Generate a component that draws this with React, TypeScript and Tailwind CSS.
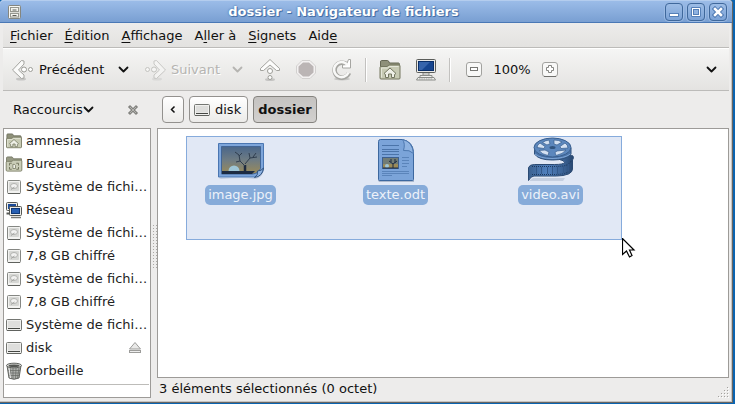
import type { ReactNode } from "react";

/* ---------- small glyphs ---------- */

function Chevron({ color = "#111" }: { color?: string }) {
  return (
    <svg width="11" height="7" viewBox="0 0 11 7" aria-hidden="true" className="shrink-0">
      <path d="M1.500 1.500L5.500 5.500L9.500 1.500" fill="none" stroke={color} strokeWidth="1.800" strokeLinecap="round" strokeLinejoin="round" />
    </svg>
  );
}

function BackIcon() {
  return (
    <svg width="24" height="24" viewBox="0 0 24 24" aria-hidden="true">
      <ellipse cx="10" cy="21" rx="5" ry="1.500" fill="#000" opacity=".15" />
      <path d="M10.500 2.500L1.500 12L10.500 20.500L13 20V17L7.500 12L13 6V3Z" fill="#fbfbfa" stroke="#a3a39f" strokeLinejoin="round" />
      <circle cx="13" cy="11.500" r="2.500" fill="#fff" stroke="#9c9c97" />
      <circle cx="19.500" cy="11.500" r="2" fill="#fff" stroke="#9c9c97" />
    </svg>
  );
}

function ForwardIcon() {
  return (
    <svg width="24" height="24" viewBox="0 0 24 24" aria-hidden="true" opacity=".5">
      <ellipse cx="14" cy="21" rx="5" ry="1.500" fill="#000" opacity=".12" />
      <path d="M13.500 2.500L22.500 12L13.500 20.500L11 20V17L16.500 12L11 6V3Z" fill="#fbfbfa" stroke="#a3a39f" strokeLinejoin="round" />
      <circle cx="4.500" cy="11.500" r="2" fill="#fff" stroke="#9c9c97" />
      <circle cx="11" cy="11.500" r="2.500" fill="#fff" stroke="#9c9c97" />
    </svg>
  );
}

function UpIcon() {
  return (
    <svg width="24" height="24" viewBox="0 0 24 24" aria-hidden="true">
      <ellipse cx="12" cy="21.500" rx="5" ry="1.500" fill="#000" opacity=".15" />
      <path d="M12 1.500L2.500 10.500V12.500H5.500L12 7L18.500 12.500H21.500V10.500Z" fill="#fdfdfc" stroke="#a3a39f" strokeLinejoin="round" />
      <circle cx="12" cy="13" r="2.500" fill="#fff" stroke="#9c9c97" />
      <circle cx="12" cy="19.500" r="2" fill="#fff" stroke="#9c9c97" />
    </svg>
  );
}

function StopIcon() {
  return (
    <svg width="24" height="24" viewBox="0 0 24 24" aria-hidden="true">
      <path d="M8 2.500h8l5.500 5.500v7L16 20.500H8L2.500 15V8Z" fill="#f3f1f1" stroke="#d2d0cf" />
      <path d="M9 4.500h6l4.500 4v6l-4.500 4H9l-4.500-4v-6Z" fill="#bbb5b5" />
    </svg>
  );
}

function ReloadIcon() {
  return (
    <svg width="24" height="24" viewBox="0 0 24 24" aria-hidden="true">
      <ellipse cx="12" cy="21" rx="8" ry="1.500" fill="#000" opacity=".15" />
      <path d="M17 6.500A7.500 7.500 0 1 0 19 15" fill="none" stroke="#a6a6a2" strokeWidth="4.500" />
      <path d="M20.500 1.500v8.500h-8v-3l4-.5l2-5Z" fill="#fff" stroke="#a6a6a2" strokeLinejoin="round" />
      <path d="M17.500 7A7.500 7.500 0 1 0 18.500 14.500" fill="none" stroke="#f8f8f7" strokeWidth="2.500" />
    </svg>
  );
}

function HomeFolderIcon({ size }: { size: number }) {
  return (
    <svg width={size} height={size} viewBox="0 0 24 24" aria-hidden="true" className="shrink-0">
      <path d="M2.500 20V4Q2.500 2.500 3.500 2.500H9.500Q10.500 2.500 11 4L11.500 5H20.500Q21.500 5 21.500 6.500V20Z" fill="#8e9079" stroke="#666855" />
      <path d="M2 20V9.500Q2 8.500 3 8.500H9L11 7H21Q22 7 22 8V20Q22 21 21 21H3Q2 21 2 20Z" fill="#c7cab3" stroke="#74775f" />
      <path d="M3.500 19.500V10H9.500L11.500 8.500H20.500" fill="none" stroke="#e5e7d9" />
      <path d="M6 15.500L12 10L18 15.500L16.500 16.500V19.500H13.500V16H10.500V19.500H7.500V16.500Z" fill="#eff0e7" stroke="#737660" />
    </svg>
  );
}

function DesktopFolderIcon() {
  return (
    <svg width="18" height="18" viewBox="0 0 24 24" aria-hidden="true" className="shrink-0">
      <path d="M2 20V4Q2 2.500 3.500 2.500H9.500L11.500 5H22V20Z" fill="#979a84" stroke="#696c58" />
      <path d="M1.500 20V9.500Q1.500 8.500 3 8.500H9L11 7H21Q22.500 7 22.500 8V20Q22.500 21.500 21 21.500H3Q1.500 21.500 1.500 20Z" fill="#c9ccb7" stroke="#74775f" />
      <path d="M6 14v-3h3M15 11h3v3M18 16v3h-3M9 19H6v-3" fill="none" stroke="#73765f" strokeWidth="1.300" />
      <path d="M10.500 12.500h2l1.500 1.500v4h-3.500Z" fill="#eff0e7" stroke="#73765f" />
    </svg>
  );
}

function ComputerIcon() {
  return (
    <svg width="24" height="24" viewBox="0 0 24 24" aria-hidden="true">
      <path d="M9 14h6v4H9Z" fill="#c8c9c6" stroke="#898b87" />
      <rect x="2.500" y="1.500" width="19" height="13" rx="1" fill="#e9e9e7" stroke="#5b5d5a" />
      <rect x="4.500" y="3.500" width="15" height="9" fill="#16458f" stroke="#0a2f69" />
      <path d="M5 4h11L8 12H5Z" fill="#5684c8" opacity=".5" />
      <path d="M6 17.500h12v2H6Z" fill="#f2f2f0" stroke="#8a8c88" />
      <path d="M4 19.500h16l1.500 2.500h-19Z" fill="#f0f0ee" stroke="#8a8c88" />
      <path d="M5 21h14" stroke="#a0a29e" strokeDasharray="1.500 .8" />
    </svg>
  );
}

function NetworkIcon() {
  return (
    <svg width="18" height="18" viewBox="0 0 18 18" aria-hidden="true" className="shrink-0">
      <rect x="1.500" y="1.500" width="11" height="8" rx="1" fill="#ecece9" stroke="#555753" />
      <rect x="3" y="3" width="8" height="5" fill="#1c4b98" />
      <path d="M1.500 12.500h5" stroke="#555753" strokeWidth="2" />
      <rect x="4.500" y="5.500" width="12" height="9" rx="1" fill="#ecece9" stroke="#555753" />
      <rect x="6.500" y="7.500" width="8" height="5" fill="#2860b3" stroke="#103875" />
      <path d="M6 16.500h10" stroke="#777975" strokeWidth="1.500" />
    </svg>
  );
}

function HardDiskIcon() {
  return (
    <svg width="18" height="18" viewBox="0 0 18 18" aria-hidden="true" className="shrink-0">
      <rect x="2.500" y="2.500" width="13" height="13" rx="1" fill="#f2f2f0" stroke="#858783" />
      <path d="M3 15.500h12" stroke="#5f615d" />
      <rect x="4" y="4" width="10" height="9" rx="1" fill="#d6d7d4" />
      <ellipse cx="9" cy="8" rx="3.500" ry="2.500" fill="#f2f2f1" stroke="#b2b3b0" />
      <path d="M6 11.500L9.500 9" stroke="#a4a5a2" />
    </svg>
  );
}

function VolumeIcon() {
  return (
    <svg width="18" height="18" viewBox="0 0 18 18" aria-hidden="true" className="shrink-0">
      <rect x="1.500" y="3.500" width="15" height="11" rx="1" fill="#f0f0ee" stroke="#747672" />
      <path d="M3 5h12v6.500h-12Z" fill="#dededc" />
      <path d="M3 12.500h12" stroke="#454743" />
      <path d="M2 14.500h14" stroke="#60625e" />
    </svg>
  );
}

function TrashIcon() {
  return (
    <svg width="18" height="18" viewBox="0 0 18 18" aria-hidden="true" className="shrink-0">
      <path d="M2 3.500L4 16Q9 18.500 14 16L16 3.500Z" fill="#aeb0ac" stroke="#60625e" />
      <path d="M5 6l1 10M8 6v11M11 6l-.5 11M14 6l-1.500 10M3 8.500h12M3.500 11h11M4 13.500h10" stroke="#666864" strokeWidth=".7" />
      <path d="M4 6l1.500 10" stroke="#eee" />
      <ellipse cx="9" cy="3.500" rx="7.500" ry="2.300" fill="#d8d9d6" stroke="#60625e" />
      <ellipse cx="9" cy="3.800" rx="5.500" ry="1.200" fill="#555753" />
    </svg>
  );
}

function EjectIcon() {
  return (
    <svg width="14" height="14" viewBox="0 0 14 14" aria-hidden="true">
      <path d="M7 1.500L12.500 8H1.500Z" fill="#e9e9e8" stroke="#9c9c9a" strokeLinejoin="round" />
      <rect x="1.500" y="9.500" width="11" height="2" fill="#eee" stroke="#9c9c9a" />
    </svg>
  );
}

function CabinetIcon() {
  return (
    <svg width="16" height="16" viewBox="0 0 16 16" aria-hidden="true">
      <rect x="2.500" y="1.500" width="12" height="13" rx="1" fill="#dcdcd6" stroke="#85867f" />
      <path d="M3.500 14V2.500h10" fill="none" stroke="#f7f7f3" />
      <rect x="4.500" y="3.500" width="8" height="4" fill="#f4f4ef" stroke="#96978f" />
      <rect x="4.500" y="9.500" width="8" height="3.500" fill="#f4f4ef" stroke="#96978f" />
      <path d="M6.500 6h4M6.500 11.500h4" stroke="#5d5e58" />
    </svg>
  );
}

function ZoomGlyph({ plus }: { plus: boolean }) {
  return (
    <svg width="18" height="18" viewBox="0 0 18 18" aria-hidden="true">
      <rect x="1.500" y="1.500" width="15" height="14" rx="2.500" fill="#f8f8f7" stroke="#a2a29f" />
      <path d="M3 15.500h12" stroke="#70706d" />
      {plus ? (
        <path d="M7.500 4.500h3v2h2v3h-2v2h-3v-2h-2v-3h2Z" fill="#fff" stroke="#868683" />
      ) : (
        <rect x="5.500" y="6.500" width="7" height="3" fill="#fff" stroke="#777774" />
      )}
    </svg>
  );
}

/* ---------- file thumbnails ---------- */

function ImageThumb() {
  return (
    <svg width="48" height="48" viewBox="0 0 48 48" role="img" aria-label="Image">
      <defs>
        <linearGradient id="sunset" x2="0" y2="1">
          <stop stopColor="#49668a" />
          <stop offset=".5" stopColor="#6f7c83" />
          <stop offset="1" stopColor="#9b8b58" />
        </linearGradient>
      </defs>
      <path d="M2 43q24 2 37 0l7-9v4q-2 5-8 6H4Z" fill="#506891" opacity=".25" />
      <path d="M1.500 8.500h45V34q-1 6-9 8h-36Z" fill="#7da5da" stroke="#4a76b2" strokeLinejoin="round" />
      <path d="M4.500 11.500h39v22q-2 5-8 5.500h-31Z" fill="url(#sunset)" stroke="#416596" />
      <path d="M11.500 36a5.500 5.500 0 0 1 11 0Z" fill="#9fc6d6" />
      <path d="M5 36h33l-3 3H5Z" fill="#1c2b42" />
      <path d="M28 36V30" stroke="#1f2b3e" strokeWidth="2.500" />
      <path d="M28 31l-5-5-4 1M23 26l-1-6-4-3M22 21l3-3M28 29l5-6 7-1M33 23l-1-5M36 22l3-4" fill="none" stroke="#2f3d4e" />
      <path d="M46.500 33q-2 3-6 3 1 4-3 6.500 8-1 9-9.500Z" fill="#8eb2e2" stroke="#31547f" strokeLinejoin="round" />
    </svg>
  );
}

function TextThumb() {
  return (
    <svg width="48" height="48" viewBox="0 0 48 48" role="img" aria-label="Document texte">
      <path d="M6 45h36v2H7Z" fill="#304a72" opacity=".3" />
      <path d="M8.500 4.500h22q10 2 11 12v28q0 1-1 1h-33q-1 0-1-1v-38q0-2 2-2Z" fill="#7ba4d9" stroke="#3d689f" />
      <path d="M30.500 4.500q3 4 1 11 6-1 10 3-1-12-11-14Z" fill="#8fb3e1" stroke="#4d78af" />
      <path d="M10 10.500h17M10 14.500h17M10 16.500h17M10 19.500h17" stroke="#4b74a9" />
      <path d="M30 22.500h7M30 25.500h7M30 28.500h7M30 31.500h5M10 36.500h27M10 38.500h27M10 40.500h10" stroke="#5a84ba" />
      <rect x="10.500" y="22.500" width="16" height="11" fill="#717c75" stroke="#3d5f8d" />
      <path d="M11 29h15v4H11Z" fill="#9b8b58" />
      <circle cx="15" cy="31" r="2" fill="#9fc6d6" />
      <path d="M11 33h15M21 33v-4l-4-3M21 29l4-3M19 27v-3M23 28v-4" fill="none" stroke="#1f2d42" />
    </svg>
  );
}

function VideoThumb() {
  return (
    <svg width="48" height="48" viewBox="0 0 48 48" role="img" aria-label="Vidéo">
      <defs>
        <linearGradient id="film">
          <stop stopColor="#3c618f" />
          <stop offset=".4" stopColor="#5080bd" />
          <stop offset=".8" stopColor="#3a6091" />
          <stop offset="1" stopColor="#27466f" />
        </linearGradient>
      </defs>
      <path d="M2 46l4-3h32l-2 3Z" fill="#29466e" opacity=".15" />
      <path d="M34 20q9-1 12 1 1 2-.5 4v9q0 3-4 5-5 2-12 2H7q-3 0-5.500 4.500V32.500q1-3 6-3h20q9 0 10-2 0-2-5-3Z" fill="url(#film)" stroke="#2b4a73" strokeLinejoin="round" />
      <path d="M5 31.500h23q9 0 13-2 3-2 3-4M5 39.500h23q9 0 13-2.500" fill="none" stroke="#1c385c" strokeDasharray="1 1" />
      <path d="M9.500 32v7M14.500 32v7M20.500 32v7M25.500 32v7M30.500 32v7M36.500 31v7M41.500 29v7" stroke="#34598a" />
      <path d="M7.500 13v6q4 6 18 6t18.500-6v-6Z" fill="#4a73a8" stroke="#2f517c" />
      <path d="M8 19q5 4.500 17 4.500T43.500 19" fill="none" stroke="#7fa6d6" />
      <ellipse cx="25.500" cy="12.500" rx="18.500" ry="9.500" fill="#5c87bd" stroke="#3a5f8e" />
      <g fill="#d4e1f2" stroke="#3a5f8e" strokeWidth=".7">
        <path d="M15.500 7.500Q18 5.500 22 5l1 4q-3 .5-3 1Z" />
        <path d="M27 5q5 0 8 2l-5 3-3-1Z" />
        <path d="M10 12.500q0-2.500 3-4.500l5 3.500-1 2Z" />
        <path d="M38 8q3 2 3 5l-7 .5-1-2Z" />
        <path d="M12 15.500l6-.5 4 2-1 3.500q-6-1-9-5Z" />
        <path d="M30 16l9-1q-3 4-10 5.500l-1-3Z" />
      </g>
      <ellipse cx="25.500" cy="12.500" rx="3" ry="1.500" fill="#32557f" />
    </svg>
  );
}

/* ---------- data ---------- */

const menus: [string, string, string][] = [
  ["", "F", "ichier"],
  ["", "É", "dition"],
  ["", "A", "ffichage"],
  ["A", "l", "ler à"],
  ["", "S", "ignets"],
  ["Aid", "e", ""],
];

const places: { name: string; icon: ReactNode; eject?: boolean }[] = [
  { name: "amnesia", icon: <HomeFolderIcon size={18} /> },
  { name: "Bureau", icon: <DesktopFolderIcon /> },
  { name: "Système de fichi…", icon: <HardDiskIcon /> },
  { name: "Réseau", icon: <NetworkIcon /> },
  { name: "Système de fichi…", icon: <HardDiskIcon /> },
  { name: "7,8 GB chiffré", icon: <HardDiskIcon /> },
  { name: "Système de fichi…", icon: <HardDiskIcon /> },
  { name: "7,8 GB chiffré", icon: <HardDiskIcon /> },
  { name: "Système de fichi…", icon: <VolumeIcon /> },
  { name: "disk", icon: <VolumeIcon />, eject: true },
  { name: "Corbeille", icon: <TrashIcon /> },
];

const files = [
  { name: "image.jpg", thumb: <ImageThumb /> },
  { name: "texte.odt", thumb: <TextThumb /> },
  { name: "video.avi", thumb: <VideoThumb /> },
];

/* ---------- window parts ---------- */

function WindowButton({ label, children }: { label: string; children: ReactNode }) {
  return (
    <button aria-label={label} className="flex h-[18px] w-[18px] items-center justify-center rounded border border-[#3f689c] bg-linear-to-b from-[#9dbde6] to-[#7ba2d6] shadow-[0_0_0_1px_#9bbae3]">
      <svg width="12" height="12" viewBox="0 0 12 12" aria-hidden="true">{children}</svg>
    </button>
  );
}

function TitleBar() {
  return (
    <header className="flex h-[23px] items-center rounded-t border-t border-b border-t-[#b4cdee] border-b-[#4a78b5] bg-linear-to-b from-[#9bbce8] to-[#799fd2] pr-[5px] pl-1.5">
      <CabinetIcon />
      <h1 className="min-w-0 flex-1 truncate text-center text-[13px] leading-5 font-bold text-white [text-shadow:0_0_2px_#365f96,1px_1px_0_#4a74ac]">
        dossier - Navigateur de fichiers
      </h1>
      <div className="flex gap-1">
        <WindowButton label="Réduire"><rect x="1.500" y="7.500" width="9" height="3" fill="#fff" stroke="#5580b8" /></WindowButton>
        <WindowButton label="Agrandir">
          <path d="M1.500 1.500h9v9h-9Z" fill="#fff" stroke="#5580b8" />
          <rect x="3.500" y="3.500" width="5" height="5" fill="#8fb2e0" stroke="#5580b8" />
        </WindowButton>
        <WindowButton label="Fermer">
          <path d="M3 3l6 6M9 3l-6 6" stroke="#4f7ab3" strokeWidth="4.500" strokeLinecap="square" />
          <path d="M3 3l6 6M9 3l-6 6" stroke="#fff" strokeWidth="2.500" strokeLinecap="square" />
        </WindowButton>
      </div>
    </header>
  );
}

function ToolButton({ label, children }: { label: string; children: ReactNode }) {
  return <button aria-label={label} className="flex h-9 w-9 items-center justify-center">{children}</button>;
}

function Divider() {
  return <div className="mx-[5px] h-6 w-0.5 border-r border-l border-r-white border-l-[#c2c1bf]" />;
}

function Toolbar() {
  return (
    <div className="flex h-[43px] items-center border-t border-b border-t-white border-b-[#bcbbb9] bg-linear-to-b from-[#f5f5f4] to-[#e4e3e1] pr-3 pl-2">
      <button className="flex h-9 w-[98px] items-center gap-1"><BackIcon />Précédent</button>
      <button aria-label="Historique précédent" className="flex h-9 w-7 items-center justify-center"><Chevron /></button>
      <button disabled className="ml-1.5 flex h-9 w-20 items-center gap-1 text-[#b5b4b1] [text-shadow:1px_1px_0_#fff]"><ForwardIcon />Suivant</button>
      <button disabled aria-label="Historique suivant" className="flex h-9 w-7 items-center justify-center"><Chevron color="#b5b4b1" /></button>
      <div className="ml-px flex">
        <ToolButton label="Dossier parent"><UpIcon /></ToolButton>
        <ToolButton label="Arrêter"><StopIcon /></ToolButton>
        <ToolButton label="Actualiser"><ReloadIcon /></ToolButton>
      </div>
      <Divider />
      <ToolButton label="Dossier personnel"><HomeFolderIcon size={24} /></ToolButton>
      <ToolButton label="Poste de travail"><ComputerIcon /></ToolButton>
      <Divider />
      <ToolButton label="Zoom arrière"><ZoomGlyph plus={false} /></ToolButton>
      <span className="w-10 text-center">100%</span>
      <ToolButton label="Zoom avant"><ZoomGlyph plus /></ToolButton>
      <button aria-label="Plus d'outils" className="ml-auto flex h-9 items-center"><Chevron /></button>
    </div>
  );
}

function LocationBar() {
  return (
    <div className="flex h-[37px] items-center">
      <div className="flex w-[159px] items-center justify-between pr-[23px] pl-[10px]">
        <div className="relative flex items-center">
          <select aria-label="Panneau latéral" className="w-[81px] appearance-none bg-transparent">
            <option>Raccourcis</option>
          </select>
          <span className="pointer-events-none absolute right-0"><Chevron /></span>
        </div>
        <button aria-label="Fermer le panneau latéral">
          <svg width="12" height="12" viewBox="0 0 12 12" aria-hidden="true">
            <path d="M3 3l6 6M9 3l-6 6" stroke="#848480" strokeWidth="3" strokeLinecap="square" />
            <path d="M3 3l6 6M9 3l-6 6" stroke="#b3b3af" strokeWidth="1" />
          </svg>
        </button>
      </div>
      <nav aria-label="Emplacement" className="flex gap-[5px]">
        <button aria-label="Précédent" className="flex h-[27px] w-[22px] items-center justify-center rounded border border-[#93918e] bg-linear-to-b from-white to-[#ecebe9]">
          <svg width="6" height="9" viewBox="0 0 6 9" aria-hidden="true"><path d="M4.500 1.500L1.500 4.500L4.500 7.500" fill="none" stroke="#111" strokeWidth="1.500" /></svg>
        </button>
        <button className="flex h-[27px] w-[59px] items-center gap-1 rounded border border-[#93918e] bg-linear-to-b from-white to-[#ecebe9] pl-[3px]"><VolumeIcon />disk</button>
        <button aria-current="page" className="h-[27px] w-16 rounded border border-[#85837f] bg-linear-to-b from-[#c5c3c1] to-[#d2d0ce] font-bold">dossier</button>
      </nav>
    </div>
  );
}

function Sidebar() {
  return (
    <aside className="flex w-[148px] shrink-0 flex-col border border-[#9d9b98] bg-white">
      <ul>
        {places.map((place, i) => (
          <li key={i} className="flex h-[23px] items-center pr-2 pl-px">
            <button className="flex min-w-0 flex-1 items-center gap-[3px] text-left whitespace-nowrap text-[#222]">
              {place.icon}
              {place.name}
            </button>
            {place.eject && <button aria-label="Éjecter disk"><EjectIcon /></button>}
          </li>
        ))}
      </ul>
      <hr className="mx-px mt-0.5 border-[#bdbcb9]" />
    </aside>
  );
}

function FileView() {
  return (
    <main className="relative min-w-0 flex-1 border border-[#9d9b98] bg-white pt-1.5 pl-[5px]">
      <div className="absolute top-[7px] left-7 h-[104px] w-[436px] border border-[#86abdc] bg-[#e1e8f5]">
        <svg width="14" height="21" viewBox="0 0 14 21" aria-hidden="true" className="absolute -right-[15px] -bottom-5">
          <path d="M.5 .5V16.500L4.500 13L7.500 19L10 17.500L7.500 12H12Z" fill="#fff" stroke="#000" strokeWidth="1.200" />
        </svg>
      </div>
      <ul className="relative flex">
        {files.map((file) => (
          <li key={file.name} className="w-[155px]">
            <button aria-pressed="true" className="mx-auto flex flex-col items-center gap-0.5">
              {file.thumb}
              <span className="h-5 rounded-[5px] bg-[#86abd9] px-[3px] leading-5 text-[#edf2fa]">{file.name}</span>
            </button>
          </li>
        ))}
      </ul>
    </main>
  );
}

function ResizeGrip() {
  return (
    <svg width="11" height="11" viewBox="0 0 11 11" aria-hidden="true" className="self-end">
      <path d="M9 0h1v1h-1zM6 3h1v1h-1zM9 3h1v1h-1zM3 6h1v1h-1zM6 6h1v1h-1zM9 6h1v1h-1zM0 9h1v1h-1zM3 9h1v1h-1zM6 9h1v1h-1zM9 9h1v1h-1z" fill="#a3a19e" />
      <path d="M10 1h1v1h-1zM7 4h1v1h-1zM10 4h1v1h-1zM4 7h1v1h-1zM7 7h1v1h-1zM10 7h1v1h-1zM1 10h1v1h-1zM4 10h1v1h-1zM7 10h1v1h-1zM10 10h1v1h-1z" fill="#fff" />
    </svg>
  );
}

export default function App() {
  return (
    <div className="flex min-h-screen flex-col bg-[#0a64b1] pr-0.5 pb-px font-['DejaVu_Sans',sans-serif] text-[13px] leading-4 text-[#111]">
      <div className="flex flex-1 flex-col rounded-t border-r border-b border-[#676562] bg-[#edeceb]">
        <TitleBar />
        <div className="flex flex-1 flex-col border-r border-b border-[#c6c4c2] pr-[2px] pb-[3px] pl-[3px]">
          <nav aria-label="Menu" className="flex h-[25px] items-end border-b border-[#bcbbb9] bg-linear-to-b from-[#edeceb] to-[#e3e2e0] pb-[3px] pl-px">
            {menus.map(([before, key, after]) => (
              <button key={key} className="px-1.5">
                {before}
                <span className="underline underline-offset-2">{key}</span>
                {after}
              </button>
            ))}
          </nav>
          <Toolbar />
          <LocationBar />
          <div className="flex flex-1">
            <Sidebar />
            <div className="flex w-1.5 shrink-0 items-center justify-center">
              <div className="mb-8 h-[46px] w-[5px] bg-[radial-gradient(circle,#aaa8a5_32%,transparent_34%)] bg-size-[3px_3px]" />
            </div>
            <div className="flex min-w-0 flex-1 flex-col">
              <FileView />
              <footer className="flex h-5 items-end justify-between pl-0.5">
                <span className="pb-px">3 éléments sélectionnés (0 octet)</span>
                <ResizeGrip />
              </footer>
            </div>
          </div>
        </div>
      </div>
    </div>
  );
}
